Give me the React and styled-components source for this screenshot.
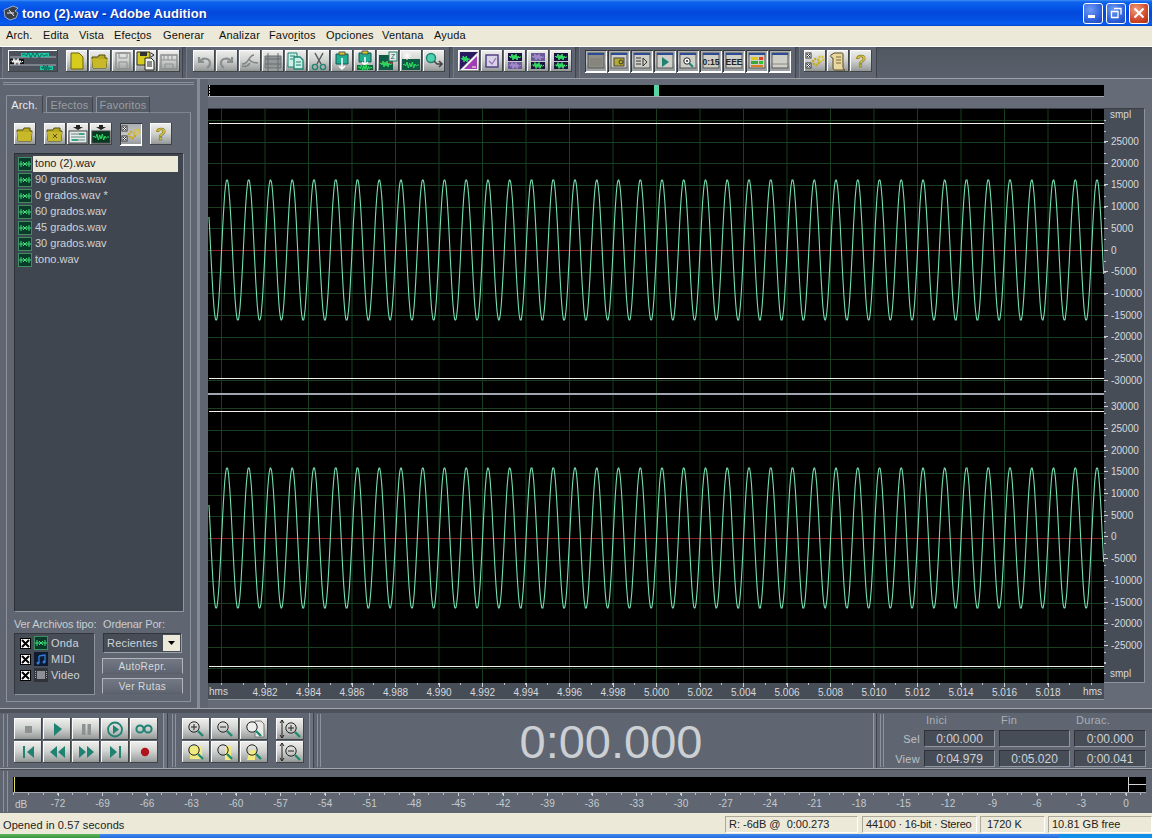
import React from 'react';
import styled, { createGlobalStyle, css } from 'styled-components';

const Global = createGlobalStyle`
  html, body { margin: 0; padding: 0; background: #5f6671; }
  body { font-family: "Liberation Sans", Arial, sans-serif; font-size: 11px; }
  * { box-sizing: border-box; }
`;

const Page = styled.div`
  width: 1152px; height: 838px; overflow: hidden;
  display: flex; flex-direction: column; background: #5f6671; color: #d9dce0;
`;

/* ---------- title ---------- */
const TitleBar = styled.div`
  height: 26px; flex: none; display: flex; align-items: center; padding: 0 3px 0 3px;
  background: linear-gradient(#3d8df5 0, #0f62ea 2px, #0657ea 7px, #0448dc 13px, #0452e6 20px, #0a5cf0 24px, #0446c8 26px);
`;
const TitleText = styled.div`
  flex: 1; margin-left: 3px; color: #fff; font-weight: bold; font-size: 13px;
  letter-spacing: 0.05px; text-shadow: 1px 1px 0 #0a2f90; white-space: nowrap;
`;
const WinButtons = styled.div`display: flex; gap: 3px;`;
const WinBtn = styled.div`
  width: 20px; height: 21px; border: 1px solid #fff; border-radius: 3px;
  display: flex; align-items: center; justify-content: center;
  background: ${p => p.$close
    ? 'radial-gradient(circle at 35% 30%, #f0a080, #d0482a 60%, #a82c10)'
    : 'radial-gradient(circle at 35% 30%, #6f9cf5, #2f62dc 60%, #1c44b8)'};
`;

/* ---------- menu ---------- */
const MenuBar = styled.div`
  height: 21px; flex: none; display: flex; align-items: center; padding: 0 0 2px 6px;
  background: #ece9d8; color: #111; border-bottom: 1px solid #fff;
`;
const MenuItem = styled.div`width: ${p => p.$w}px; white-space: nowrap; letter-spacing: 0.15px;`;
const U = styled.span`text-decoration: underline;`;

/* ---------- toolbar ---------- */
const ToolBar = styled.div`
  height: 32px; flex: none; display: flex; gap: 3px; padding-left: 2px;
  background: linear-gradient(#454a52 0, #525862 2px, #5a616c 100%);
  border-bottom: 1px solid #9aa0a8;
`;
const ToolGroup = styled.div`
  display: flex; align-items: center; height: 31px; gap: 1px; padding: 0 ${p => p.$pr}px 3px ${p => p.$pl}px;
  background: #5f6671; border-left: 1px solid #737a85; border-right: 1px solid #3f444c;
`;
const Btn = styled.div`
  width: ${p => p.$w || 22}px; height: 22px; flex: none;
  display: flex; align-items: center; justify-content: center;
  background: linear-gradient(#f0f0ee, #d2d4d2 45%, #a2a6a4 85%, #8a8e8c);
  box-shadow: inset -1px -1px 0 #3f4446, inset 1px 1px 0 #fbfbfb;
  ${p => p.$on && css`
    background: linear-gradient(#a8acae, #c4c6c6 50%, #92979a);
    box-shadow: inset 1px 1px 0 #34383c, inset -1px -1px 0 #fff, 0 1px 0 #fff;
  `}
  ${p => p.$big && css`width: 28px; height: 22px;`}
  ${p => p.$ml && css`margin-left: ${p.$ml}px;`}
  ${p => p.$mr && css`margin-right: ${p.$mr}px;`}
`;

/* ---------- main ---------- */
const Main = styled.div`
  height: 630px; flex: none; display: flex; border-bottom: 1px solid #a3a8af;
`;
const Left = styled.div`
  width: 197px; flex: none; padding: 3px 6px 0; display: flex; flex-direction: column;
`;
const GripH = styled.div`
  height: 3px; margin: 0 -3px 10px; flex: none;
  border-top: 1px solid #8b919a; border-bottom: 1px solid #8b919a;
`;
const Tabs = styled.div`display: flex; height: 18px; flex: none; position: relative; z-index: 1; gap: 3px;`;
const Tab = styled.div`
  width: ${p => p.$w}px; height: ${p => (p.$active ? 18 : 17)}px; margin-top: ${p => (p.$active ? 0 : 1)}px;
  display: flex; align-items: center; justify-content: center;
  color: ${p => (p.$active ? '#e9ebee' : '#969ca5')};
  background: ${p => (p.$active ? '#5f6671' : '#565c66')};
  border: 1px solid #8d939c; border-bottom: ${p => (p.$active ? 'none' : '1px solid #8d939c')};
  border-right-color: #41464e; border-radius: 2px 2px 0 0; letter-spacing: 0.2px;
`;
const TabPanel = styled.div`
  height: 590px; flex: none; margin-top: -1px; padding: 10px 6px 0 7px;
  border: 1px solid #8d939c; border-top-color: #7f858e; display: flex; flex-direction: column;
`;
const PanelTools = styled.div`display: flex; flex: none; height: 22px;`;
const FileList = styled.div`
  height: 459px; width: 170px; flex: none; margin-top: 8px; padding: 2px 5px 0 3px;
  background: #3f464f; border: 1px solid #9097a0; border-top-color: #2c3137; border-left-color: #2c3137;
`;
const FileRow = styled.div`display: flex; align-items: center; height: 16px; gap: 1px;`;
const FileName = styled.div`
  flex: 1; height: 16px; line-height: 14px; padding-left: 2px;
  color: ${p => (p.$sel ? '#1c1c1c' : '#cfd3d8')};
  background: ${p => (p.$sel ? '#ece9d8' : 'transparent')};
`;
const FilterGrid = styled.div`
  display: grid; grid-template-columns: 81px 79px; column-gap: 8px; margin-top: 5px;
`;
const Cap = styled.div`height: 16px; line-height: 15px; color: #c8ccd1; white-space: nowrap; letter-spacing: -0.15px;`;
const TypeBox = styled.div`
  height: 62px; padding: 1px 0 0 5px; background: #474d57;
  border: 1px solid #8d939c; border-top-color: #32363c; border-left-color: #32363c;
`;
const TypeRow = styled.div`display: flex; align-items: center; height: 16px; color: #cfd3d8;`;
const Check = styled.div`
  width: 11px; height: 11px; flex: none; margin-right: 3px; background: #fff; border: 1px solid #000;
  display: flex;
`;
const TypeLabel = styled.span`margin-left: 3px; letter-spacing: 0.2px;`;
const SideCol = styled.div`display: flex; flex-direction: column; margin-left: -1px; width: 81px;`;
const Combo = styled.div`
  height: 20px; margin-left: 1px; width: 79px; display: flex; align-items: center; justify-content: space-between;
  padding: 1px 1px 1px 3px; background: #474d57; color: #cfd3d8; letter-spacing: 0.2px;
  border: 1px solid #9aa0a8; border-top-color: #32363c; border-left-color: #32363c;
`;
const ComboBtn = styled.div`
  width: 17px; height: 16px; background: #ece9d8; display: flex; align-items: center; justify-content: center;
`;
const PanelBtn = styled.div`
  height: 16px; margin-top: ${p => p.$mt}px; display: flex; align-items: center; justify-content: center;
  background: linear-gradient(#727985, #5e6570); color: #d6d9dd; font-size: 10px; letter-spacing: 0.4px;
  border: 1px solid #5a606a; border-top-color: #b0b5bc; border-left-color: #b0b5bc; border-right-color: #b0b5bc;
`;
const SplitBar = styled.div`
  width: 3px; flex: none; margin-right: 8px; background: #868c95;
`;

const Right = styled.div`
  flex: 1; background: #656c77; display: flex; flex-direction: column; padding-top: 6px;
`;
const Overview = styled.div`
  width: 896px; height: 12px; flex: none; background: #000; display: flex;
  border-bottom: 1px solid #a6abb2;
`;
const OverTick = styled.div`width: 1px; height: 11px; margin-left: 1px; background: repeating-linear-gradient(#d8d060 0 2px, #000 2px 3px);`;
const OverMark = styled.div`width: 5px; height: 11px; margin-left: 444px; background: #58d4a4;`;
const WaveRow = styled.div`
  display: flex; flex: none; margin-top: 11px; height: 575px;
`;
const CanvasCol = styled.div`width: 896px; flex: none; display: flex; flex-direction: column; background: #000; border-top: 1px solid #3a3f46;`;
const Channel = styled.svg`display: block; flex: none;`;
const ChannelGap = styled.div`height: 2px; flex: none; background: #a2a6b0;`;
const Axis = styled.div`
  width: 41px; flex: none; display: flex; flex-direction: column; color: #d6d9dd; font-size: 10px;
  background-color: #474d57;
  border-right: 1px solid #8d939c; border-top: 1px solid #3a3f46; border-bottom: 1px solid #8d939c;
  background-image: repeating-linear-gradient(#c0c4c9 0 1px, transparent 1px 10.85px);
  background-size: 2px 100%; background-repeat: no-repeat; background-position: 0 11px;
`;
const AxisRow = styled.div`
  height: ${p => p.$h}px; display: flex; flex: none; white-space: nowrap;
  align-items: ${p => p.$align || 'center'};
`;
const AxisTick = styled.span`width: 4px; height: 1px; background: #d0d4d8; margin-right: 3px; flex: none;`;
const AxisText = styled.span`margin-left: ${p => p.$ml || 0}px; padding: ${p => p.$pad || 0};`;
const TimeRuler = styled.div`
  width: 896px; height: 17px; flex: none; display: flex; color: #d6d9dd; font-size: 10px;
  background-color: #474d57; border-bottom: 1px solid #8d939c;
  background-image: repeating-linear-gradient(90deg, #c0c4c9 0 1px, transparent 1px 21.75px);
  background-size: 100% 2px; background-repeat: no-repeat; background-position: 13px 0;
`;
const Hms = styled.div`
  flex: ${p => (p.$grow ? 1 : 'none')}; width: ${p => (p.$grow ? 'auto' : '35.25px')};
  padding: 3px 2px 0 1px; text-align: ${p => (p.$grow ? 'right' : 'left')};
`;
const TimeCell = styled.div`
  width: 43.5px; flex: none; display: flex; flex-direction: column; align-items: center;
`;
const VTick = styled.span`width: 1px; height: ${p => p.$h || 4}px; background: #d0d4d8; flex: none;`;

/* ---------- transport ---------- */
const Transport = styled.div`
  height: 60px; flex: none; display: flex; border-top: 4px solid #4d535c; border-bottom: 1px solid #a3a8af;
  background: #5f6671; align-items: stretch;
`;
const Grip = styled.div`
  width: ${p => p.$w}px; margin-left: ${p => p.$ml}px; flex: none; margin-top: 1px; margin-bottom: 1px;
  border-left: 1px solid #8d939c; border-right: 1px solid #8d939c;
`;
const EndBar = styled.div`
  width: ${p => p.$w}px; margin-left: ${p => p.$ml}px; flex: none; background: #6c737e;
  border-left: 1px solid #949aa2; border-right: 1px solid #3f444c;
`;
const Pad = styled.div`
  margin-left: ${p => p.$ml}px; flex: none; padding-top: 5px;
  display: grid; grid-template-columns: repeat(${p => p.$cols}, 28px); grid-auto-rows: 22px; gap: 1px;
`;
const TimeBox = styled.div`
  flex: 1; display: flex; align-items: center; justify-content: center; padding: 1px 0 0 28px;
  font-size: 47px; color: #ccd0d5; line-height: 1;
`;
const Readouts = styled.div`
  margin-right: 6px; flex: none; display: grid; grid-template-columns: 36px 71px 71px 72px;
  grid-template-rows: 14px 17px 17px; column-gap: 4px; row-gap: 3px; align-items: center;
`;
const RHead = styled.div`color: #a9afb6; padding-left: 2px; letter-spacing: 0.3px;`;
const RLabel = styled.div`color: #bcc1c7; text-align: right; padding-right: 1px; margin-right: -1px; letter-spacing: 0.3px;`;
const RValue = styled.div`
  height: 17px; line-height: 16px; text-align: center; color: #cdd1d6; font-size: 12px;
  background: #474d57; border: 1px solid #9097a0; border-top-color: #2f3339; border-left-color: #2f3339;
`;

/* ---------- level meter ---------- */
const Meter = styled.div`height: 44px; flex: none; display: flex; background: #5f6671; border-top: 1px solid #474d56;`;
const MeterCol = styled.div`margin-left: 5px; width: 1135px; flex: none; padding-top: 7px; display: flex; flex-direction: column;`;
const MeterBar = styled.div`
  width: 1133px; height: 16px; flex: none; background: #000; display: flex; justify-content: space-between;
  border-bottom: 1px solid #a6abb2;
`;
const YellowTick = styled.div`width: 1px; height: 15px; margin-left: 1px; background: #e6dc60;`;
const MeterEnd = styled.div`
  width: 18px; height: 15px; border-left: 1px solid #d0d4d8; display: flex; align-items: center;
`;
const MeterEndLine = styled.div`width: 100%; height: 1px; background: #d0d4d8;`;
const MeterRuler = styled.div`
  display: flex; height: 20px; flex: none; color: #c6cacf; font-size: 10px;
  background-image: repeating-linear-gradient(90deg, #b8bcc2 0 1px, transparent 1px 14.83px);
  background-size: 100% 2px; background-repeat: no-repeat;
`;
const DbCell = styled.div`width: 22.75px; flex: none; padding: 6px 0 0 2px;`;
const MeterCell = styled.div`
  width: 44.5px; flex: none; display: flex; flex-direction: column; align-items: center; gap: 2px;
`;

/* ---------- status ---------- */
const StatusBar = styled.div`
  height: 21px; flex: none; display: flex; align-items: center; background: #ece9d8; color: #222;
  padding: 2px 0 0 3px; letter-spacing: 0.1px;
`;
const StatusMain = styled.div`width: 722px; flex: none;`;
const StatusCell = styled.div`
  width: ${p => p.$w}px; margin-right: ${p => p.$mr}px; height: 17px; line-height: 15px; flex: none;
  padding-left: ${p => p.$pl || 3}px; border: 1px solid #aca899; border-right-color: #fff; border-bottom-color: #fff; white-space: pre;
  letter-spacing: ${p => p.$ls || 0}px;
`;
const Taskbar = styled.div`height: 4px; flex: none; display: flex; background: linear-gradient(#3f8df0, #2468d8);`;
const TaskStart = styled.div`width: 100px; background: linear-gradient(#5cb85c, #3a913a);`;
const TaskTray = styled.div`margin-left: 959px; flex: 1; background: #1290e8;`;

/* ---------- icons ---------- */
const IconSvg = styled.svg`display: block; flex: none;`;
const S = ({ w = 22, h = 22, children }) => (
  <IconSvg width={w} height={h} viewBox={`0 0 ${w} ${h}`}>{children}</IconSvg>
);
const WavePath = ({ x, y, w, c = '#2fe060' }) => {
  const s = w / 12;
  const ys = [0, -1, 1, -3, 3, -2, 2, -3, 3, -1, 1, 0, 0];
  return <polyline fill="none" stroke={c} strokeWidth="1"
    points={ys.map((d, i) => `${x + i * s},${y + d}`).join(' ')} />;
};
const PurpleTrack = ({ x, y, w, h, on }) => (
  <g>
    <rect x={x} y={y} width={w} height={h} fill={on ? '#1d1140' : '#6a5a96'} />
    <WavePath x={x + 1} y={y + h / 2} w={w - 2} c={on ? '#36ee66' : '#a890d0'} />
  </g>
);
const FileIcon = () => (
  <S w={14} h={14}>
    <rect x=".5" y=".5" width="13" height="13" fill="#0b3a2a" stroke="#3d8f66" />
    <path d="M1 7h12M3 4v6M11 4v6M5 5l2 2-2 2M9 5l-2 2 2 2" fill="none" stroke="#3fe27a" />
  </S>
);
const Folder = ({ x = false }) => (
  <S>
    <path d="M3 7h6l1-2h6v3h2l-1 10H4z" fill="#b8a822" stroke="#55500a" />
    <path d="M3 9h15l-1 9H4z" fill="#c7b92a" />
    {x && <path d="M9 11l4 4M13 11l-4 4" stroke="#55500a" />}
  </S>
);
const Mag = ({ sign, paper }) => (
  <S w={28} h={22}>
    {paper === 'full' && <rect x="8" y="5" width="12" height="13" fill="#f0ea80" />}
    {paper === 'r' && <rect x="14" y="5" width="6" height="14" fill="#f0ea80" />}
    {paper === 'l' && <path d="M7 19h8V9H10z" fill="#f0ea80" />}
    {paper === 'doc' && <path d="M15 3h6l3 3v13h-9z" fill="#e9e9e6" stroke="#777" />}
    <line x1="16" y1="13" x2="21" y2="18" stroke="#1f8a70" strokeWidth="2.4" />
    <circle cx="12" cy="9" r="5.2" fill={paper === 'doc' ? '#eee' : 'none'} stroke="#222" />
    {sign && <path d="M9 9h6" stroke="#222" />}
    {sign === '+' && <path d="M12 6v6" stroke="#222" />}
  </S>
);
const VMag = ({ sign }) => (
  <S w={28} h={22}>
    <path d="M6 2v18M4 5l2-3 2 3M4 17l2 3 2-3" fill="none" stroke="#222" />
    <line x1="19" y1="14" x2="24" y2="19" stroke="#1f8a70" strokeWidth="2.4" />
    <circle cx="15" cy="10" r="5.2" fill="none" stroke="#222" />
    <path d="M12 10h6" stroke="#222" />
    {sign === '+' && <path d="M15 7v6" stroke="#222" />}
  </S>
);
const Window = ({ children, dark }) => (
  <S>
    <rect x="3" y="3" width="16" height="15" fill={dark ? '#8f8f88' : '#cfcfc8'} stroke="#555" />
    <rect x="3" y="3" width="16" height="2" fill="#2b4a94" />
    {children}
  </S>
);
const Q = () => (
  <S><text x="11" y="17" textAnchor="middle" fontSize="17" fontWeight="bold" fill="#d8c93a" stroke="#6a6010" strokeWidth=".5" fontFamily="Liberation Sans">?</text></S>
);
const Gears = () => (
  <S>
    <rect x="2" y="3" width="5" height="5" fill="#fff" stroke="#333" />
    <path d="M3 4l3 3M6 4l-3 3" stroke="#333" />
    <rect x="2" y="13" width="5" height="5" fill="#fff" stroke="#333" />
    <path d="M3 14l3 3M6 14l-3 3" stroke="#333" />
    <circle cx="12" cy="12" r="3" fill="none" stroke="#c8a81e" strokeWidth="2.4" strokeDasharray="2 1" />
    <circle cx="17" cy="9" r="2.5" fill="none" stroke="#d8c030" strokeWidth="2.2" strokeDasharray="2 1" />
  </S>
);
const TEAL = '#1f8272';
const CYAN = '#1fae90';

const icons = {
  new: <S><path d="M5 3h8l4 4v12H5z" fill="#d6cc1e" stroke="#6a640a" /></S>,
  open: <Folder />,
  save: <S><path d="M4 3h14v16H4z" fill="none" stroke="#8d9090" strokeWidth="1.4" /><path d="M7 3h8v5H7zM7 12h8v7H7z" fill="none" stroke="#8d9090" /></S>,
  saveAs: (
    <S>
      <path d="M2 2h13v13H2z" fill="#d6cc1e" stroke="#333" />
      <path d="M5 2h7v4H5z" fill="#333" />
      <path d="M10 8h6l3 3v9h-9z" fill="#f4f4f0" stroke="#222" />
      <path d="M12 12h5M12 14h5M12 16h5" stroke="#222" />
      <path d="M16 3l3 2-3 2" fill="none" stroke="#222" />
    </S>
  ),
  saveAll: <S><path d="M3 5h16v14H3z" fill="none" stroke="#8d9090" strokeWidth="1.4" /><path d="M6 5v5M10 5v5M14 5v5M3 10h16M7 14h8v5H7z" fill="none" stroke="#8d9090" /></S>,
  undo: <S><path d="M6 7v5h5M7 12c2-5 10-4 10 1 0 2-1 4-3 5" fill="none" stroke="#8a8e8e" strokeWidth="2.2" /></S>,
  redo: <S><path d="M16 7v5h-5M15 12c-2-5-10-4-10 1 0 2 1 4 3 5" fill="none" stroke="#8a8e8e" strokeWidth="2.2" /></S>,
  repeat: <S><path d="M3 14c4 0 5-2 7-5s3-4 5-4M10 9c1 2 3 4 9 4M3 16c3 1 6 0 8-3" fill="none" stroke="#7f8484" strokeWidth="1.5" /></S>,
  crop: <S><path d="M3 6h16v12H3z" fill="#93989a" stroke="#6c7072" /><path d="M6 3v18M16 3v18M3 9h16M3 14h16" fill="none" stroke="#666a6c" /></S>,
  copy: <S><path d="M3 3h9v14H3z" fill="#cdf0e6" stroke={TEAL} /><path d="M9 7h6l3 3v9H9z" fill="#cdf0e6" stroke={TEAL} strokeWidth="1.3" /><path d="M5 6h5M5 9h3M11 12h5M11 15h5" stroke={TEAL} /></S>,
  cut: <S><path d="M7 3l6 11M15 3L9 14" stroke="#555" strokeWidth="1.4" /><circle cx="7" cy="17" r="2.6" fill="none" stroke={TEAL} strokeWidth="1.4" /><circle cx="15" cy="17" r="2.6" fill="none" stroke={TEAL} strokeWidth="1.4" /></S>,
  paste: <S><path d="M5 4h12v10H5z" fill={CYAN} stroke="#155" /><path d="M8 2h6v3H8z" fill="#d6cc1e" stroke="#555" /><path d="M11 8v11M8 16l3 3 3-3" fill="none" stroke="#fff" strokeWidth="1.5" /></S>,
  mix: <S><path d="M5 3h12v9H5z" fill={CYAN} stroke="#155" /><path d="M8 1h6v3H8z" fill="#d6cc1e" stroke="#555" /><path d="M11 7v8M8 12l3 3 3-3" fill="none" stroke="#fff" strokeWidth="1.5" /><rect x="3" y="15" width="16" height="5" fill="#0f6a40" /><WavePath x={4} y={17.5} w={14} /></S>,
  zed: <S><rect x="2" y="5" width="14" height="15" fill="#0f5a44" /><path d="M2 13h14" stroke="#c03030" /><WavePath x={3} y={14} w={12} /><rect x="12" y="2" width="8" height="9" fill="#e8ece8" stroke="#276" /><text x="16" y="9" textAnchor="middle" fontSize="7" fill="#155" fontFamily="Liberation Sans">Z</text></S>,
  spark: <S><rect x="2" y="9" width="18" height="11" fill="#0f5a44" /><WavePath x={3} y={15} w={16} /><path d="M7 2v8M3 6h8M4 3l6 6M10 3l-6 6" stroke="#fff" /></S>,
  marker: <S><circle cx="8" cy="8" r="4.5" fill="#4fd0b0" stroke={TEAL} strokeWidth="1.4" /><path d="M11 11l3 3h5M16 11l3 3-3 3" fill="none" stroke="#444" strokeWidth="1.6" /></S>,
  both: <S><rect x="2" y="2" width="18" height="18" fill="#2a1a60" /><path d="M2 20L20 2v18z" fill="#f0f0f0" /><path d="M6 19L19 6v13z" fill="#a03fb0" /><WavePath x={3} y={9} w={9} /><path d="M14 17h4" stroke="#fff" /></S>,
  check: <S><rect x="5" y="5" width="12" height="12" fill="#d8d4e8" stroke="#4a3a80" strokeWidth="1.4" /><path d="M8 11l3 3 4-6" fill="none" stroke="#9a70c0" strokeWidth="1.3" /></S>,
  t1: <S><PurpleTrack x={4} y={3} w={14} h={8} on /><PurpleTrack x={4} y={12} w={14} h={7} /></S>,
  t2: <S><PurpleTrack x={4} y={3} w={14} h={8} /><PurpleTrack x={4} y={12} w={14} h={7} on /></S>,
  t3: <S><PurpleTrack x={4} y={3} w={14} h={8} on /><PurpleTrack x={4} y={12} w={14} h={7} on /></S>,
  vwin: <Window dark><path d="M5 8h12v8H5z" fill="#85857e" /></Window>,
  vfile: <Window><rect x="6" y="8" width="10" height="8" fill="#b4ac30" stroke="#444" /><circle cx="13" cy="12" r="2" fill="none" stroke="#333" /></Window>,
  vfx: <Window><path d="M5 8h5M5 11h5M5 14h5" stroke="#333" /><path d="M12 8l4 4-4 4z" fill="none" stroke="#333" /></Window>,
  vplay: <Window><path d="M8 7l7 5-7 5z" fill={TEAL} /></Window>,
  vzoom: <Window><circle cx="10" cy="11" r="3.2" fill="#fff" stroke="#222" /><path d="M9 11h2M10 10v2" stroke="#222" /><path d="M12 13l4 4" stroke={TEAL} strokeWidth="2" /></Window>,
  vtime: <Window><text x="11" y="15" textAnchor="middle" fontSize="8.5" fontWeight="bold" fill="#222" fontFamily="Liberation Sans">0:15</text></Window>,
  vfields: <Window><text x="11" y="15" textAnchor="middle" fontSize="8.5" fontWeight="bold" fill="#222" fontFamily="Liberation Sans">EEE</text></Window>,
  vlevel: <Window><path d="M5 7h7v3H5z" fill="#d8c820" /><path d="M5 11h7v3H5z" fill="#38a838" /><path d="M13 7h4v3h-4z" fill="#e04020" /><path d="M13 11h4v3h-4z" fill="#30c030" /><path d="M5 15h12v2H5z" fill="#d88020" /></Window>,
  vstatus: <Window><path d="M3 14h16" stroke="#888" /></Window>,
  gears: <Gears />,
  script: <S><path d="M6 4c-3 0-3 4 0 4v10c0 2 2 2 3 2h9c-2 0-2-3-2-3V4c0-1-1-1-2-1H7z" fill="#e8d8a0" stroke="#5a4a20" /><path d="M9 7h5M9 10h5M9 13h5" stroke="#7a6a30" /></S>,
  help: <Q />,
  filesClose: <Folder x />,
  insert: (
    <S>
      <path d="M9 2h4v2h3l-5 3-5-3h3z" fill="#222" />
      <rect x="2" y="8" width="18" height="12" fill="#e6eaea" stroke="#444" />
      <path d="M4 11h14M4 14h14M4 17h14" stroke="#5c8a80" />
      <path d="M12 11h5M5 17h6" stroke="#12a070" strokeWidth="1.4" />
    </S>
  ),
  extract: (
    <S>
      <path d="M9 2h4v2h3l-5 3-5-3h3z" fill="#222" />
      <rect x="2" y="8" width="18" height="12" fill="#073a22" stroke="#444" />
      <WavePath x={3} y={14} w={16} />
    </S>
  ),
};
const T = { stroke: 'none', fill: TEAL };
const transport = {
  stop: <S w={28}><rect x="11" y="8" width="7" height="7" fill="#8d9191" /></S>,
  play: <S w={28}><path d="M11 5l8 6-8 7z" {...T} /></S>,
  pause: <S w={28}><path d="M10 6h3.5v11H10zM15.5 6H19v11h-3.5z" fill="#8d9191" /></S>,
  from: <S w={28}><circle cx="14" cy="11.5" r="7" fill="none" stroke={TEAL} strokeWidth="1.8" /><path d="M12 7l6 4.5-6 4.5z" {...T} /></S>,
  loop: <S w={28}><circle cx="10" cy="11" r="3.6" fill="none" stroke={TEAL} strokeWidth="2" /><circle cx="18" cy="11" r="3.6" fill="none" stroke={TEAL} strokeWidth="2" /></S>,
  start: <S w={28}><path d="M9 5h2v12H9zM20 5v12l-7-6z" {...T} /></S>,
  rew: <S w={28}><path d="M14 5v12l-7-6zM22 5v12l-7-6z" {...T} /></S>,
  ff: <S w={28}><path d="M7 5v12l7-6zM15 5v12l7-6z" {...T} /></S>,
  end: <S w={28}><path d="M9 5v12l7-6zM18 5h2v12h-2z" {...T} /></S>,
  rec: <S w={28}><circle cx="15" cy="11" r="4.2" fill="#b0141c" /></S>,
};

const Logo = () => (
  <S w={50} h={22}>
    <rect x="1" y="1" width="48" height="20" fill="#4c525c" />
    <path d="M2 7h46M2 15h46" stroke="#aab0b8" />
    <rect x="13" y="3" width="28" height="4" fill="#1fc8a8" />
    <WavePath x={14} y={5} w={26} c="#0d6a58" />
    <rect x="2" y="9" width="14" height="5" fill="#111" />
    <WavePath x={3} y={11.5} w={12} c="#fff" />
    <rect x="32" y="16" width="13" height="4" fill="#1fc8a8" />
    <WavePath x={33} y={18} w={11} c="#0d6a58" />
  </S>
);

/* ---------- waveform ---------- */
const CANVAS_W = 896;
const PERIOD = 21.75;
const GRID = '#173f20';
const wavePoints = (cy) => {
  const pts = [];
  for (let x = 1; x <= CANVAS_W; x += 0.4932) {
    const ph = ((x + 208 - 227) / PERIOD) * Math.PI * 2;
    pts.push(`${x.toFixed(2)},${Math.round(cy - 70.5 * Math.cos(ph))}`);
  }
  return pts.join(' ');
};
const WaveChannel = ({ height, cy, w1, w2 }) => {
  const vs = Array.from({ length: 21 }, (_, i) => 13.5 + i * 43.5);
  const hs = Array.from({ length: 13 }, (_, i) => Math.round(cy + (i - 6) * 21.7) + 0.5);
  return (
    <Channel width={CANVAS_W} height={height}>
      {vs.map(x => <line key={x} x1={x} x2={x} y1="0" y2={height} stroke={GRID} />)}
      {hs.map(y => <line key={y} x1="0" x2={CANVAS_W} y1={y} y2={y} stroke={GRID} />)}
      <line x1="1" x2={CANVAS_W} y1={cy + 0.5} y2={cy + 0.5} stroke="#8e2424" />
      <line x1="1" x2={CANVAS_W} y1={w1 + 0.5} y2={w1 + 0.5} stroke="#f2f2ec" />
      <line x1="1" x2={CANVAS_W} y1={w2 + 0.5} y2={w2 + 0.5} stroke="#f2f2ec" />
      <polyline points={wavePoints(cy)} fill="none" stroke="#74e0b0" strokeWidth="1.1" />
    </Channel>
  );
};

const FILES = ['tono (2).wav', '90 grados.wav', '0 grados.wav *', '60 grados.wav', '45 grados.wav', '30 grados.wav', 'tono.wav'];
const MENU = [
  ['Arch.', 37], ['Edita', 36], ['Vista', 35],
  [<>Efec<U>t</U>os</>, 49], ['Generar', 56], ['Analizar', 50],
  [<>Favo<U>r</U>itos</>, 57], ['Opciones', 56], ['Ventana', 52], ['Ayuda', 40],
];
const TOOL_GROUPS = [
  { pl: 5, pr: 2, items: ['new', 'open', 'save', 'saveAs', 'saveAll'], logo: true },
  { pl: 6, pr: 4, items: ['undo', 'redo', 'repeat', 'crop', 'copy', 'cut', 'paste', 'mix', 'zed', 'spark', 'marker'] },
  { pl: 4, pr: 3, items: ['both', 'check', 't1', 't2', 't3'] },
  { pl: 5, pr: 4, on: true, items: ['vwin', 'vfile', 'vfx', 'vplay', 'vzoom', 'vtime', 'vfields', 'vlevel', 'vstatus'] },
  { pl: 4, pr: 4, items: ['gears', 'script', 'help'] },
];
const UP = ['30000', '25000', '20000', '15000', '10000', '5000', '0', '-5000', '-10000', '-15000', '-20000', '-25000', '-30000'];
const TIMES = Array.from({ length: 19 }, (_, i) => (4.982 + i * 0.002).toFixed(3));
const DBS = Array.from({ length: 25 }, (_, i) => (i === 24 ? '0' : String(-72 + i * 3)));

const XMark = () => (
  <Check><S w={9} h={9}><path d="M1 1l7 7M8 1l-7 7" stroke="#000" strokeWidth="2" /></S></Check>
);

export default function App() {
  return (
    <Page>
      <Global />
      <TitleBar>
        <S w={16} h={16}>
          <path d="M1 5l9-4 5 2-3 3 3 2-2 5-6 2-5-3z" fill="#3b3f48" stroke="#d0d4e0" strokeWidth=".7" />
          <path d="M4 8h7M6 5l5 6" stroke="#f0f0f0" />
        </S>
        <TitleText>tono (2).wav - Adobe Audition</TitleText>
        <WinButtons>
          <WinBtn><S w={12} h={12}><rect x="1" y="8" width="7" height="3" fill="#fff" /></S></WinBtn>
          <WinBtn><S w={12} h={12}><path d="M4 1.5h7v6M1.5 4.5h6.5v6H1.5z" fill="none" stroke="#fff" strokeWidth="1.3" /></S></WinBtn>
          <WinBtn $close><S w={12} h={12}><path d="M1.5 1.5l9 9M10.5 1.5l-9 9" stroke="#fff" strokeWidth="2" /></S></WinBtn>
        </WinButtons>
      </TitleBar>

      <MenuBar>
        {MENU.map(([label, w], i) => <MenuItem key={i} $w={w}>{label}</MenuItem>)}
      </MenuBar>

      <ToolBar>
        {TOOL_GROUPS.map((g, i) => (
          <ToolGroup key={i} $pl={g.pl} $pr={g.pr}>
            {g.logo && <Btn $w={50} $mr={7}><Logo /></Btn>}
            {g.items.map(name => <Btn key={name} $on={g.on}>{icons[name]}</Btn>)}
          </ToolGroup>
        ))}
      </ToolBar>

      <Main>
        <Left>
          <GripH />
          <Tabs>
            <Tab $active $w={37}>Arch.</Tab>
            <Tab $w={47}>Efectos</Tab>
            <Tab $w={54}>Favoritos</Tab>
          </Tabs>
          <TabPanel>
            <PanelTools>
              <Btn>{icons.open}</Btn>
              <Btn $ml={8}>{icons.filesClose}</Btn>
              <Btn $ml={1}>{icons.insert}</Btn>
              <Btn $ml={1}>{icons.extract}</Btn>
              <Btn $ml={8} $on>{icons.gears}</Btn>
              <Btn $ml={8}>{icons.help}</Btn>
            </PanelTools>
            <FileList>
              {FILES.map((f, i) => (
                <FileRow key={f}>
                  <FileIcon />
                  <FileName $sel={i === 0}>{f}</FileName>
                </FileRow>
              ))}
            </FileList>
            <FilterGrid>
              <Cap>Ver Archivos tipo:</Cap>
              <Cap>Ordenar Por:</Cap>
              <TypeBox>
                <TypeRow><XMark /><FileIcon /><TypeLabel>Onda</TypeLabel></TypeRow>
                <TypeRow>
                  <XMark />
                  <S w={14} h={14}><rect width="14" height="14" fill="#101a30" /><path d="M5 4l6-1v7M5 4v7" fill="none" stroke="#2f7fe0" strokeWidth="1.3" /><circle cx="4" cy="11" r="1.5" fill="#2f7fe0" /><circle cx="10" cy="10" r="1.5" fill="#2f7fe0" /></S>
                  <TypeLabel>MIDI</TypeLabel>
                </TypeRow>
                <TypeRow>
                  <XMark />
                  <S w={14} h={14}><rect width="14" height="14" fill="#30343a" /><rect x="3" y="3" width="8" height="8" fill="#8c9096" /><path d="M1.5 3v8M12.5 3v8" stroke="#aaa" strokeDasharray="1 1" /></S>
                  <TypeLabel>Video</TypeLabel>
                </TypeRow>
              </TypeBox>
              <SideCol>
                <Combo>
                  Recientes
                  <ComboBtn><S w={9} h={6}><path d="M1 1h7L4.5 5z" fill="#000" /></S></ComboBtn>
                </Combo>
                <PanelBtn $mt={5}>AutoRepr.</PanelBtn>
                <PanelBtn $mt={4}>Ver Rutas</PanelBtn>
              </SideCol>
            </FilterGrid>
          </TabPanel>
        </Left>
        <SplitBar />
        <Right>
          <Overview>
            <OverTick />
            <OverMark />
          </Overview>
          <WaveRow>
            <CanvasCol>
              <WaveChannel height={284} cy={141} w1={14} w2={269} />
              <ChannelGap />
              <WaveChannel height={288} cy={143} w1={16} w2={271} />
            </CanvasCol>
            <Axis>
              <AxisRow $h={21.75} $align="flex-start"><AxisText $ml={6}>smpl</AxisText></AxisRow>
              {UP.slice(1).map(v => (
                <AxisRow key={'a' + v} $h={21.7}><AxisTick /><AxisText>{v}</AxisText></AxisRow>
              ))}
              <AxisRow $h={5} />
              {UP.slice(0, 12).map(v => (
                <AxisRow key={'b' + v} $h={21.7}><AxisTick /><AxisText>{v}</AxisText></AxisRow>
              ))}
              <AxisRow $h={24} $align="flex-end"><AxisText $ml={6} $pad="0 0 1px">smpl</AxisText></AxisRow>
            </Axis>
          </WaveRow>
          <TimeRuler>
            <Hms>hms</Hms>
            {TIMES.map(t => (
              <TimeCell key={t}><VTick /><span>{t}</span></TimeCell>
            ))}
            <Hms $grow>hms</Hms>
          </TimeRuler>
        </Right>
      </Main>

      <Transport>
        <Grip $ml={3} $w={5} />
        <Pad $ml={6} $cols={5}>
          {['stop', 'play', 'pause', 'from', 'loop', 'start', 'rew', 'ff', 'end', 'rec'].map(k => (
            <Btn key={k} $big>{transport[k]}</Btn>
          ))}
        </Pad>
        <EndBar $ml={5} $w={5} />
        <Grip $ml={4} $w={4} />
        <Pad $ml={6} $cols={3}>
          <Btn $big><Mag sign="+" /></Btn>
          <Btn $big><Mag sign="-" /></Btn>
          <Btn $big><Mag paper="doc" /></Btn>
          <Btn $big><Mag paper="full" /></Btn>
          <Btn $big><Mag paper="r" /></Btn>
          <Btn $big><Mag paper="l" /></Btn>
        </Pad>
        <Pad $ml={8} $cols={1}>
          <Btn $big><VMag sign="+" /></Btn>
          <Btn $big><VMag sign="-" /></Btn>
        </Pad>
        <EndBar $ml={5} $w={5} />
        <Grip $ml={3} $w={4} />
        <TimeBox>0:00.000</TimeBox>
        <EndBar $ml={0} $w={4} />
        <Grip $ml={3} $w={4} />
        <Readouts>
          <span />
          <RHead>Inici</RHead>
          <RHead>Fin</RHead>
          <RHead>Durac.</RHead>
          <RLabel>Sel</RLabel>
          <RValue>0:00.000</RValue>
          <RValue />
          <RValue>0:00.000</RValue>
          <RLabel>View</RLabel>
          <RValue>0:04.979</RValue>
          <RValue>0:05.020</RValue>
          <RValue>0:00.041</RValue>
        </Readouts>
      </Transport>

      <Meter>
        <Grip $ml={3} $w={5} />
        <MeterCol>
          <MeterBar>
            <YellowTick />
            <MeterEnd><MeterEndLine /></MeterEnd>
          </MeterBar>
          <MeterRuler>
            <DbCell>dB</DbCell>
            {DBS.map(d => (
              <MeterCell key={d}><VTick $h={3} /><span>{d}</span></MeterCell>
            ))}
          </MeterRuler>
        </MeterCol>
      </Meter>

      <StatusBar>
        <StatusMain>Opened in 0.57 seconds</StatusMain>
        <StatusCell $w={133} $mr={4}>{'R: -6dB @  0:00.273'}</StatusCell>
        <StatusCell $w={115} $mr={3} $ls={-0.2}>44100 · 16-bit · Stereo</StatusCell>
        <StatusCell $w={65} $mr={3} $pl={6}>1720 K</StatusCell>
        <StatusCell $w={104} $mr={0}>10.81 GB free</StatusCell>
      </StatusBar>
      <Taskbar>
        <TaskStart />
        <TaskTray />
      </Taskbar>
    </Page>
  );
}
